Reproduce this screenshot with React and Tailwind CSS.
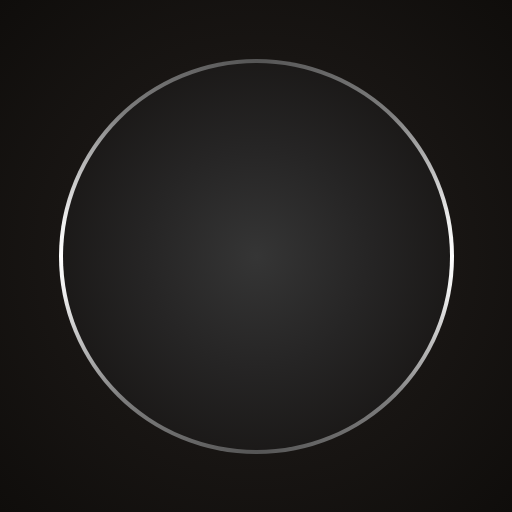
import React from "react";

const App = () => {
  return (
    <div className="w-[512px] h-[512px] flex items-center justify-center bg-[radial-gradient(circle_at_center,#221e1b_0%,#181513_55%,#0f0d0b_100%)]">
      <div className="w-[395px] h-[395px] rounded-full p-[4px] bg-[conic-gradient(from_0deg,#555555_0%,#7d7d7d_12%,#eeeeee_22%,#ffffff_25%,#eeeeee_28%,#7d7d7d_38%,#555555_50%,#7d7d7d_62%,#eeeeee_72%,#ffffff_75%,#eeeeee_78%,#7d7d7d_88%,#555555_100%)]">
        <div className="w-full h-full rounded-full bg-[radial-gradient(circle_at_center,#353535_0%,#262525_40%,#1a1817_75%,#151312_100%)]" />
      </div>
    </div>
  );
};

export default App;
